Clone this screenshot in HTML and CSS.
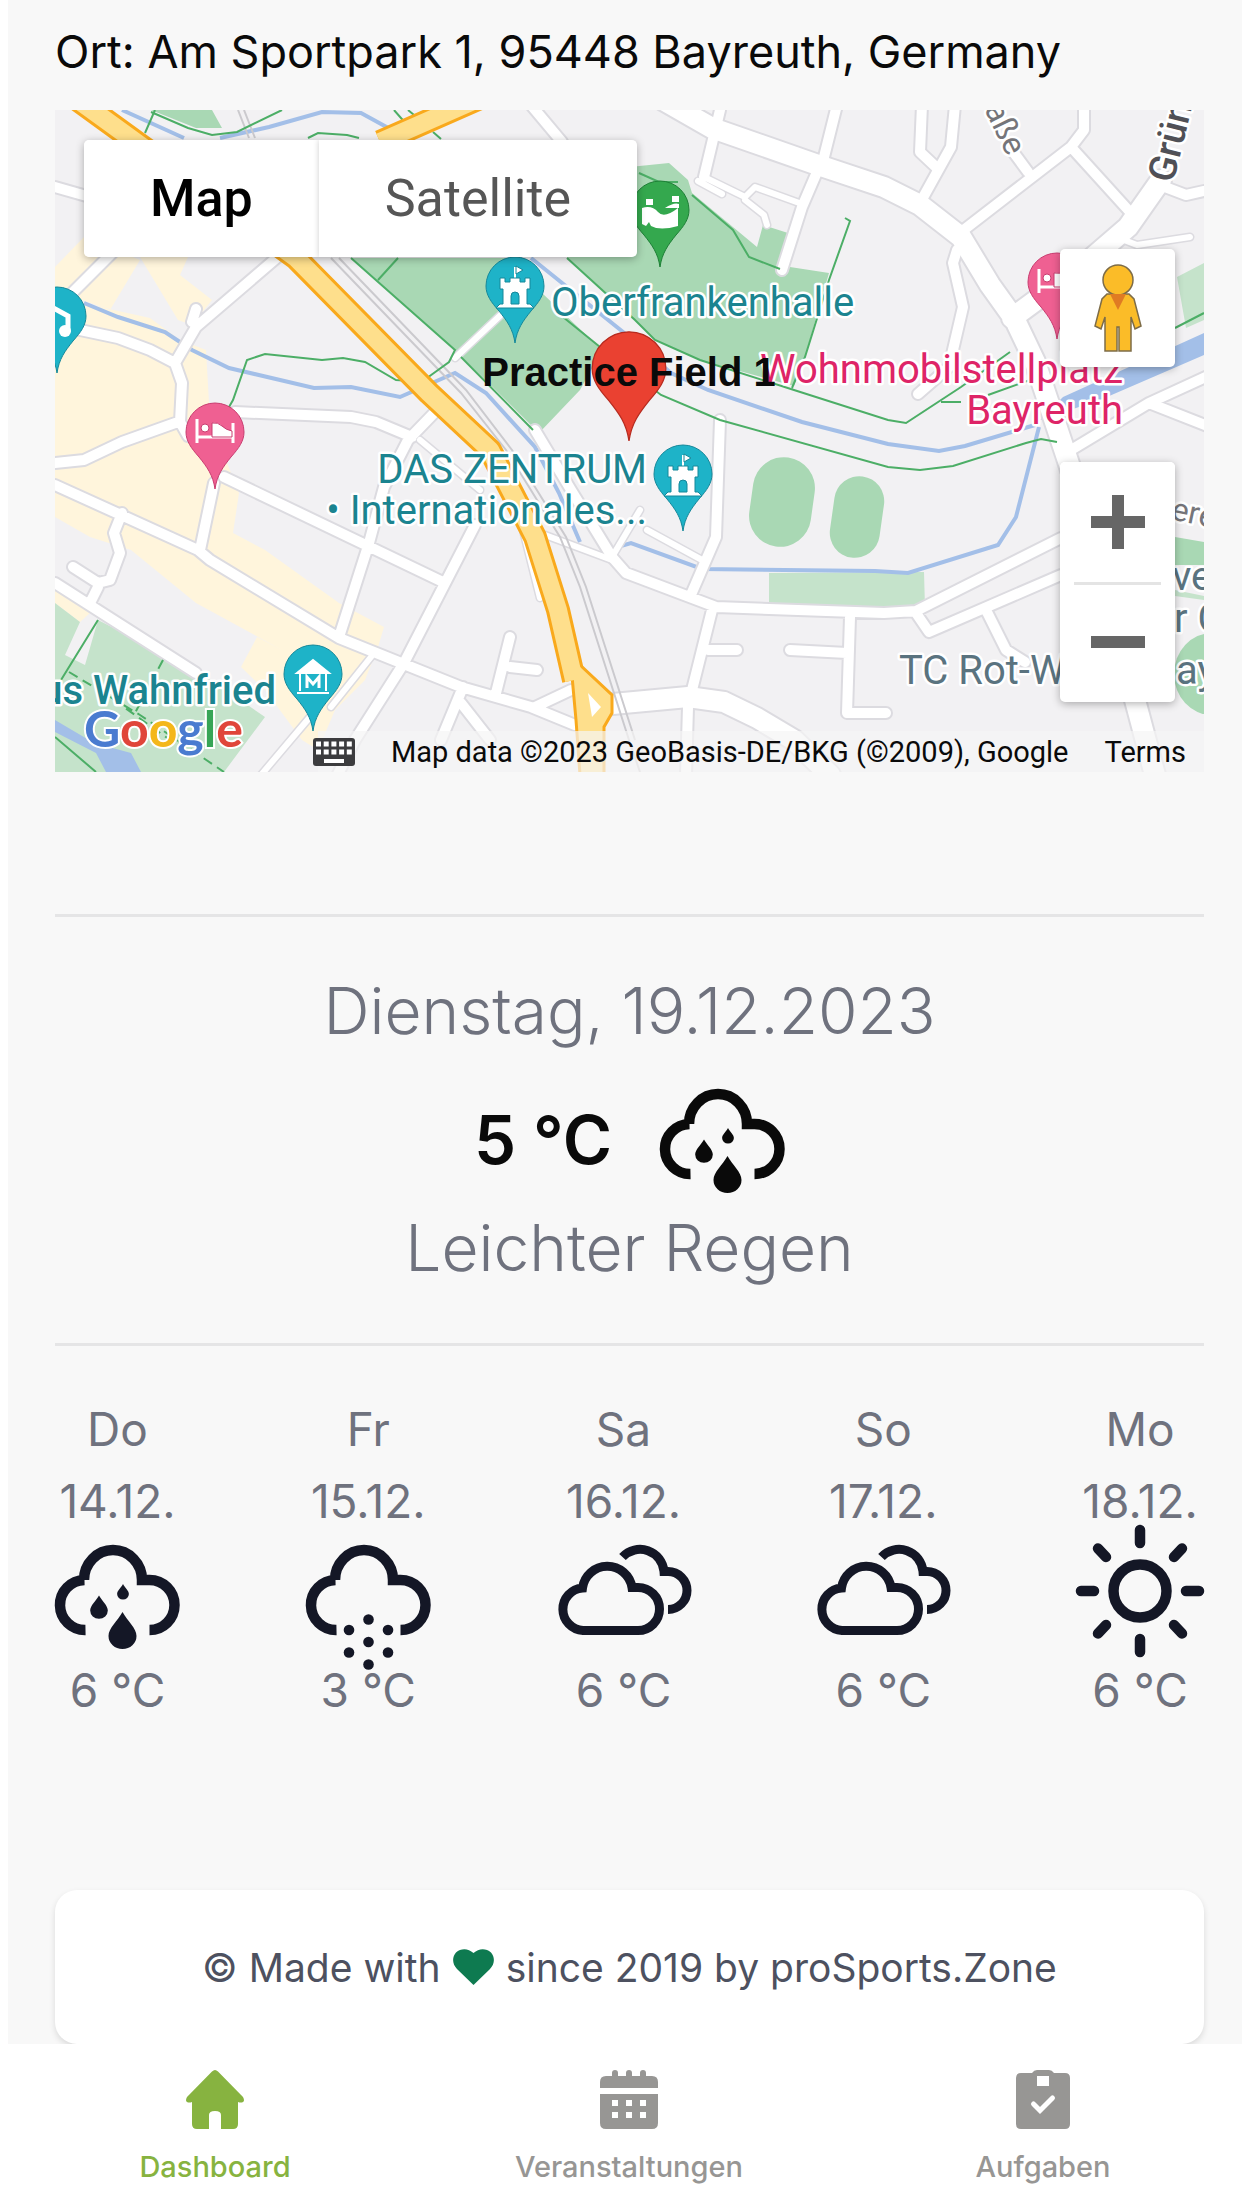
FILE: index.html
```html
<!DOCTYPE html>
<html lang="de">
<head>
<meta charset="utf-8">
<meta name="viewport" content="width=device-width, initial-scale=1">
<title>Dashboard – proSports.Zone</title>
<link rel="stylesheet" href="styles.css">
</head>
<body>
<svg class="sprite" width="0" height="0" aria-hidden="true">
  <defs>
    <path id="drop" d="M0 0C5 9 14 16 14 24A14 13 0 0 1-14 24C-14 16-5 9 0 0Z"/>
    <path id="open-cloud" d="M30.500 93A25 25 0 0 1 29.500 43L29 43A29 30 0 0 1 87 43L94.500 43A25 25 0 0 1 94.500 93" fill="none" stroke="currentColor" stroke-width="10.500"/>
    <symbol id="icon-rain" viewBox="0 0 125 117" overflow="visible">
      <use href="#open-cloud"/>
      <g fill="currentColor">
        <use href="#drop" transform="translate(67.500 75)"/>
        <use href="#drop" transform="translate(44 58.500) scale(.63)"/>
        <use href="#drop" transform="translate(68 47) scale(.42)"/>
      </g>
    </symbol>
    <symbol id="icon-snow" viewBox="0 0 125 117" overflow="visible">
      <use href="#open-cloud"/>
      <g fill="currentColor">
        <circle cx="62.500" cy="82.500" r="5.300"/><circle cx="62.500" cy="105" r="5.300"/><circle cx="62.500" cy="127.500" r="5.300"/>
        <circle cx="43" cy="93" r="5.300"/><circle cx="82" cy="93" r="5.300"/><circle cx="43" cy="115.500" r="5.300"/><circle cx="82" cy="115.500" r="5.300"/>
      </g>
    </symbol>
    <symbol id="icon-cloudy" viewBox="0 0 134 117" overflow="visible">
      <g fill="none" stroke="currentColor" stroke-width="9">
        <path d="M26 93.500A21.300 21.300 0 0 1 25.500 51A25 25 0 0 1 75 50.500L81 50.500A21.500 21.500 0 0 1 81 93.500Z"/>
        <path d="M65.500 20A24 24 0 0 1 107 34.500L111 34.500A19 19 0 0 1 111 72.500"/>
      </g>
    </symbol>
    <symbol id="icon-sun" viewBox="0 0 128 117" overflow="visible">
      <g fill="none" stroke="currentColor" stroke-width="10.500" stroke-linecap="round">
        <circle cx="64" cy="54" r="26.500"/>
        <path d="M64-7V6M64 102v13M5 54H18M110 54h13M22 11.500 30 20M106 11.500 98 20M22 96.500 30 88M106 96.500 98 88"/>
      </g>
    </symbol>
  </defs>
</svg>

<div class="app">
  <main class="content">
    <p class="place">Ort: Am Sportpark 1, 95448 Bayreuth, Germany</p>

    <section class="map" aria-label="Karte">
      <svg class="map-canvas" viewBox="55 110 1149 662">
        <defs>
          <path id="pin" d="M0 0C-2-14-8-22-16-32C-24-41-29-48-29-57A29 29 0 1 1 29-57C29-48 24-41 16-32C8-22 2-14 0 0Z"/>
          <g id="castle"><path d="M0-76v14" stroke="#fff" stroke-width="2"/><path d="M1-77 8-73 1-69ZM-15-65h5v4h5v-4H5v4h5v-4h5v11h-3v15H15l4 4h-38l4-4h3v-15h-3z" fill="#fff"/><path class="door" d="M-4-39v-8a4 4 0 0 1 8 0v8z"/></g>
          <g id="bed"><path d="M-18-70v24M-18-52h36v6M18-52v-14" fill="none" stroke="#fff" stroke-width="3"/><circle cx="-10" cy="-61" r="4" fill="#fff"/><path d="M-3-66q6-1 10 3 4 4 10 5v6H-3z" fill="#fff"/></g>
          <g id="roads-lg">
            <path d="M663 100 712 128 818 165 884 187 920 205 961 237 990 285 1015 320 1035 362 1051 410 1071 470M1161 180 1128 227 1084 265 1012 318"/>
            <path d="M602 705 688 697 724 702 757 718 794 740 830 775M1135 700 1155 775"/>
          </g>
          <g id="roads-md">
            <path d="M720 110 704 177M837 105 824 157M820 165 802 207 782 270M922 105 920 152 937 168M955 105 951 147 920 203M1084 105V130L1071 147 961 232M1014 153 1028 172M1071 147 1130 212M1165 187 1186 195 1204 191M957 250 953 263 963 307 949 367 918 394"/>
            <path d="M55 187 90 197M531 105 562 142M115 250 73 292M280 255 196 327 175 363 182 383 180 422 188 436M80 330 118 338 150 350 175 363M196 309 192 322M55 463 84 460 122 442 178 422M235 412 351 417 376 422 412 437M437 410 408 440 384 487 369 543 339 637M224 477 445 583M475 525 404 663 355 740 335 780M55 485 198 550 210 560 339 638 461 687 531 707 575 725M214 483 200 550M122 513 114 533 120 553 110 580 98 583 73 567M98 587 90 603M55 583 196 673M510 637 496 693M510 667 537 670M463 687 441 740M461 703 490 740M535 707 571 690M535 430 571 490 612 557 626 573 716 607 884 613 916 611 1061 538M916 613 929 632 1061 575M720 420 716 537 690 597M712 610 692 690M708 650H737M790 650 847 653M850 617 847 713H886M986 610 1006 650 1025 662M688 707 686 775M1071 450 1149 403 1210 375M1149 403 1210 427"/>
          </g>
          <g id="roads-sm"><path d="M704 177 745 197 755 187 802 204M698 181 722 194M745 200 764 215 767 225M1124 240 1137 245 1190 237M647 530 702 560M545 535 612 560M371 657 331 707M310 717 261 775M506 310 455 358M612 557 640 510M420 440 480 490M523 530 540 598"/></g>
        </defs>

        <rect class="land" x="55" y="110" width="1149" height="662"/>
        <g class="town">
          <path d="M84 237 55 267V310L82 300 110 310 140 260ZM140 257H188L180 275 212 300 192 325 178 320ZM55 330 82 303 150 318 180 340 206 350 210 420 239 493 233 533 265 550 339 603 384 627 378 647 365 680 335 710 318 750 302 740 265 690 241 667 257 637 282 650 196 603 131 550 90 537 55 517ZM55 590 90 613 80 622 55 603Z"/>
        </g>
        <g class="park">
          <path d="M151 110H212L222 128H196ZM351 258 455 350 539 433 580 390 602 350 505 258ZM567 258 635 320 655 340 700 360 794 386 806 353 829 273 790 267 782 271 788 233 763 225 757 247 692 193 688 180 669 163 600 170Z"/>
          <rect x="751" y="457" width="62" height="90" rx="31" transform="rotate(8 782 502)"/>
          <rect x="832" y="476" width="50" height="82" rx="25" transform="rotate(8 857 517)"/>
          <path d="M1175 537 1204 542V565H1175Z"/><ellipse cx="1212" cy="674" rx="38" ry="41"/>
        </g>
        <path class="garden" d="M769 573 924 572 925 608 769 603ZM1177 277 1204 263V320L1186 328ZM55 603 80 622 65 655 85 665 98 620 196 670 265 717 224 772H55ZM1175 590 1204 596V600L1175 596Z"/>
        <path class="lake" d="M55 720 94 743 131 753 141 772H106L96 753 55 732ZM1204 333 1063 397 1040 420 1100 400 1204 355Z"/>
        <path class="river" d="M122 110 184 138M220 138 269 127 322 112 361 113 392 130M531 258 633 340 671 373 708 390 802 422 888 444 939 451 965 446 1035 425M84 303 118 317 165 332 192 350 229 368 314 388 351 387 400 397 455 373 486 393 535 447 559 493 580 542M614 548 631 543 702 569 875 571 908 573 998 545 1016 517 1039 427"/>
        <g class="casing"><use href="#roads-sm" stroke-width="9"/><use href="#roads-md" stroke-width="14"/><use href="#roads-lg" stroke-width="24"/></g>
        <g class="road"><use href="#roads-sm" stroke-width="6"/><use href="#roads-md" stroke-width="10"/><use href="#roads-lg" stroke-width="20"/></g>
        <path class="rail" d="M331 258 461 393 506 450 560 537 580 587 629 740 640 772M339 258 466 390 512 450 566 537 586 587 635 740M238 110 249 138M244 110 255 138"/>
        <path class="trail" d="M155 110 145 133M151 112 188 128 212 135 237 132 282 110M308 138 318 133 347 135 359 138M394 110 408 126M408 110 420 120M433 132 441 139M351 258 455 350 449 362 427 378M398 258 378 280M229 407 233 400 247 360 265 354 322 360 343 358 365 362 396 380 412 381M461 357 533 430M563 317 600 347 661 395 720 420 888 467 920 470 953 466 1026 443 1041 439 1057 442M567 258 635 320 655 340 700 360 794 390 888 420 906 423 961 387 1010 352M941 402H961M988 395 1030 380M692 195 733 230 749 257 780 269M845 218 850 221 829 280 805 357 792 388M639 173 659 182 678 182M1175 328 1204 313M98 620 61 680M55 737 96 772"/>
        <path class="trail dashed" d="M163 660 135 713M69 672 140 715 224 772M100 690 170 740"/>
        <path class="highway-edge" d="M78 100 140 145 296 258 429 393 490 450 535 537 558 610 574 680M480 98 380 142"/>
        <path class="highway-edge-thin" d="M571 665 580 665 612 695V713L604 727V775H580L576 720Z"/>
        <path class="highway" d="M78 100 140 145 296 258 429 393 490 450 535 537 558 610 574 680M480 98 380 142"/>
        <path fill="#fff" d="M588 693 601 707 592 717Z"/>

        <rect class="legal-band" x="318" y="731" width="886" height="41"/>

        <g class="pin-teal">
          <use href="#pin" x="515" y="343"/><use href="#castle" x="515" y="343"/>
          <use href="#pin" x="683" y="531"/><use href="#castle" x="683" y="531"/>
          <use href="#pin" x="57" y="373"/>
          <use href="#pin" x="313" y="731"/>
        </g>
        <path d="M50 306 68 316V332" fill="none" stroke="#fff" stroke-width="5"/><circle cx="65" cy="331" r="6" fill="#fff"/>
        <path d="M297 673 313 660 329 673ZM300 673V691M326 673V691M297 693H329" fill="#fff" stroke="#fff" stroke-width="2"/>
        <path d="M307 688V677L313 684 319 677V688" fill="none" stroke="#fff" stroke-width="3"/>
        <g class="pin-pink">
          <use href="#pin" x="215" y="489"/><use href="#bed" x="215" y="489"/>
          <use href="#pin" x="1057" y="339"/><use href="#bed" x="1057" y="339"/>
        </g>
        <use class="pin-green" href="#pin" x="660" y="267"/>
        <path d="M642 208Q652 205 658 212T678 208V226Q660 231 651 226L649 222 646 226 642 224ZM646 199h7v6h-7zM672 196h7v6h-7zM665 208Q674 202 679 204V208Z" fill="#fff"/>

        <g class="label">
          <text class="culture" x="551" y="316">Oberfrankenhalle</text>
          <text class="culture end" x="647" y="483">DAS ZENTRUM</text>
          <text class="culture end" x="647" y="524">• Internationales...</text>
          <text class="culture end strong" x="276" y="704">us Wahnfried</text>
          <text class="lodging end" x="1123" y="383">Wohnmobilstellplatz</text>
          <text class="lodging end" x="1123" y="424">Bayreuth</text>
          <text class="sport" x="899" y="684">TC Rot-W</text>
          <text class="sport" x="1176" y="684">ay</text>
          <text class="sport" x="1172" y="590">ve</text>
          <text class="sport" x="1174" y="632">r C</text>
          <text class="street" transform="translate(1170 519) rotate(12)">ere</text>
          <text class="street" transform="translate(984 109) rotate(64)">aße</text>
          <text class="street main" transform="translate(1173 184) rotate(-76)">Grün</text>
        </g>

        <use class="pin-red" href="#pin" transform="translate(629 441) scale(1.270)"/>
        <text class="field-name" x="629" y="386">Practice Field 1</text>
        <text class="brand" x="84" y="747"><tspan fill="#4a7bd0">G</tspan><tspan fill="#e0453a">o</tspan><tspan fill="#f4b71b">o</tspan><tspan fill="#4a7bd0">g</tspan><tspan fill="#37a556">l</tspan><tspan fill="#e0453a">e</tspan></text>
      </svg>

      <div class="map-type">
        <button class="type-button active" type="button">Map</button>
        <button class="type-button" type="button">Satellite</button>
      </div>

      <div class="map-tools">
        <button class="tool" type="button" aria-label="Street View">
          <svg width="50" height="90" viewBox="0 0 50 90"><g fill="#fbbc28" stroke="#7d6c48" stroke-width="1.500"><path d="M14 31H36L41 36 48 63 42 66 38 54V88H26V64H24V88H12V54L8 66 2 63 9 36Z"/><circle cx="25" cy="17" r="15"/></g><path d="M17 31H33L25 47Z" fill="#e07b23"/></svg>
        </button>
        <div class="zoom">
          <button class="tool" type="button" aria-label="Vergrößern"><svg width="54" height="54" viewBox="0 0 54 54"><path d="M27 0V54M0 27H54" stroke="#666" stroke-width="12"/></svg></button>
          <button class="tool" type="button" aria-label="Verkleinern"><svg width="54" height="54" viewBox="0 0 54 54"><path d="M0 27H54" stroke="#666" stroke-width="12"/></svg></button>
        </div>
      </div>

      <div class="legal">
        <svg width="42" height="28" viewBox="0 0 42 28"><rect width="42" height="28" rx="3" fill="#3c3c3e"/><path d="M3 6H39M3 14H39" stroke="#fff" stroke-width="5" stroke-dasharray="5 2.700"/><path d="M11 23H31" stroke="#fff" stroke-width="4"/></svg>
        <span>Map data ©2023 GeoBasis-DE/BKG (©2009), Google</span>
        <a href="#terms">Terms</a>
      </div>
    </section>

    <section class="today">
      <h2 class="headline">Dienstag, 19.12.2023</h2>
      <div class="now">
        <span class="now-temp">5 °C</span>
        <svg width="125" height="117" role="img" aria-label="Regen"><use href="#icon-rain"/></svg>
      </div>
      <p class="headline">Leichter Regen</p>
    </section>

    <section class="forecast">
      <div class="day"><span>Do</span><span>14.12.</span><svg width="125" height="117"><use href="#icon-rain"/></svg><span>6 °C</span></div>
      <div class="day"><span>Fr</span><span>15.12.</span><svg width="125" height="117"><use href="#icon-snow"/></svg><span>3 °C</span></div>
      <div class="day"><span>Sa</span><span>16.12.</span><svg width="134" height="117"><use href="#icon-cloudy"/></svg><span>6 °C</span></div>
      <div class="day"><span>So</span><span>17.12.</span><svg width="134" height="117"><use href="#icon-cloudy"/></svg><span>6 °C</span></div>
      <div class="day"><span>Mo</span><span>18.12.</span><svg width="128" height="117"><use href="#icon-sun"/></svg><span>6 °C</span></div>
    </section>

    <footer class="credit">
      <span>© Made with</span>
      <svg width="41" height="36" viewBox="0 0 41 36"><path fill="#0e7a50" d="M20.500 36 4 20C-1 15-1 8 3 3.500 8-1 15-1 20.500 4 26-1 33-1 38 3.500 42 8 42 15 37 20Z"/></svg>
      <span>since 2019 by proSports.Zone</span>
    </footer>
  </main>

  <nav class="tabs">
    <a class="tab active" href="#dashboard">
      <svg width="58" height="59" viewBox="0 0 58 59"><path fill="currentColor" d="M26 1.500Q29-1.500 32 1.500L57 27Q59 31 57 32 55 33 52 32V54Q52 59 47 59H35V45Q35 41 29 41T23 45V59H11Q6 59 6 54V32Q3 33 1 32-1 31 1 27Z"/></svg>
      <span>Dashboard</span>
    </a>
    <a class="tab" href="#veranstaltungen">
      <svg width="58" height="59" viewBox="0 0 58 59"><path fill="currentColor" fill-rule="evenodd" d="M0 18V12Q0 6 6 6H12V3Q12 0 15 0T18 3V6H26V3Q26 0 29 0T32 3V6H40V3Q40 0 43 0T46 3V6H52Q58 6 58 12V18ZM0 24H58V53Q58 59 52 59H6Q0 59 0 53ZM12 30V36H18V30ZM26 30V36H32V30ZM40 30V36H46V30ZM12 42V48H18V42ZM26 42V48H32V42ZM40 42V48H46V42Z"/></svg>
      <span>Veranstaltungen</span>
    </a>
    <a class="tab" href="#aufgaben">
      <svg width="58" height="59" viewBox="0 0 58 59"><path fill="currentColor" fill-rule="evenodd" d="M7 3H18Q20 0 23 0H35Q38 0 40 3H51Q56 3 56 8V54Q56 59 51 59H7Q2 59 2 54V8Q2 3 7 3ZM23 6V16H35V6Z"/><path d="M19.500 34 26 40.500 38.500 28" fill="none" stroke="#fff" stroke-width="5" stroke-linecap="round"/></svg>
      <span>Aufgaben</span>
    </a>
  </nav>
</div>
</body>
</html>
```
FILE: styles.css
```css
* { box-sizing: border-box; }

body {
  margin: 0;
  background: #fff;
  font-family: Inter, "Liberation Sans", sans-serif;
  overflow-x: hidden;
}

p, h2 { margin: 0; }
svg { display: block; flex: none; }
button { border: 0; padding: 0; background: #fff; font: inherit; cursor: pointer; }
a { color: inherit; text-decoration: none; }

.sprite { position: absolute; }

/* The app column is as wide as the window and starts after the white edge. */
.app {
  width: 100%;
  margin-left: 8px;
}

.content {
  background: #f8f8f8;
  padding: 0 46px 0 47px;
}

.place {
  padding: 16px 0 22px;
  font-size: 45px;
  line-height: 72px;
  color: #0a0a0a;
  white-space: nowrap;
}

/* Map */
.map { position: relative; font-family: Roboto, "Liberation Sans", sans-serif; }
.map-canvas { width: 100%; height: auto; }

.land { fill: #f2f1f3; }
.town { fill: #fff5dc; }
.park { fill: #a9d8b4; }
.garden { fill: #c5e3cb; }
.lake { fill: #a3bfe8; }
.river { fill: none; stroke: #a3bfe8; stroke-width: 4; }
.casing { fill: none; stroke: #dcdbe0; stroke-linecap: round; stroke-linejoin: round; }
.road { fill: none; stroke: #fff; stroke-linecap: round; stroke-linejoin: round; }
.rail { fill: none; stroke: #cbcace; stroke-width: 2; }
.trail { fill: none; stroke: #4cae66; stroke-width: 2; }
.dashed { stroke-dasharray: 10 6; }
.highway-edge { fill: none; stroke: #f9a91c; stroke-width: 24; stroke-linejoin: round; }
.highway-edge-thin { fill: #fedf8c; stroke: #f9a91c; stroke-width: 3; }
.highway { fill: none; stroke: #fedf8c; stroke-width: 18; stroke-linejoin: round; }
.legal-band { fill: #f5f5f5; fill-opacity: .7; }

.pin-teal { fill: #1eb3c8; stroke: #15889a; stroke-width: 1; }
.pin-teal .door { fill: #1eb3c8; }
.pin-pink { fill: #ef6092; stroke: #c93d70; stroke-width: 1; }
.pin-green { fill: #34a84e; stroke: #1e7f36; stroke-width: 1; }
.pin-red { fill: #ea4131; stroke: #b72a1e; stroke-width: 1; }

.label { font-size: 40px; stroke: #fff; stroke-width: 5; stroke-linejoin: round; paint-order: stroke; }
.end { text-anchor: end; }
.culture { fill: #1b8490; }
.lodging { fill: #de2467; }
.sport { fill: #5a737f; }
.strong { font-weight: 500; }
.street { font-size: 32px; fill: #75757a; }
.street.main { font-size: 38px; font-weight: 500; fill: #505056; }
.field-name { font: bold 40px "Liberation Sans", Arial, sans-serif; fill: #0a0a0a; text-anchor: middle; }
.brand { font: bold 50px Lato, sans-serif; stroke: #fff; stroke-width: 4; paint-order: stroke; }

.map-type {
  position: absolute;
  top: 30px;
  left: 29px;
  display: flex;
  height: 117px;
  border-radius: 5px;
  box-shadow: 0 2px 8px rgba(0, 0, 0, .3);
  overflow: hidden;
}
.type-button { padding: 0 66px; font-size: 52px; color: #565656; }
.type-button.active { font-weight: 500; color: #000; }
.type-button + .type-button { box-shadow: 0 0 6px rgba(0, 0, 0, .2); }

.map-tools {
  position: absolute;
  top: 139px;
  right: 29px;
  display: flex;
  flex-direction: column;
  gap: 95px;
}
.tool {
  display: flex;
  align-items: center;
  justify-content: center;
  width: 115px;
  height: 118px;
}
.map-tools > .tool, .zoom { background: #fff; border-radius: 5px; box-shadow: 0 2px 8px rgba(0, 0, 0, .3); }
.zoom { overflow: hidden; }
.zoom .tool { height: 120px; }
.zoom .tool + .tool { background: linear-gradient(#e4e4e4, #e4e4e4) center top / 87px 3px no-repeat; }

.legal {
  position: absolute;
  right: 18px;
  bottom: 0;
  display: flex;
  align-items: center;
  height: 40px;
  gap: 36px;
  font-size: 29px;
  color: #0a0a0a;
  white-space: nowrap;
}

/* Current weather */
.today {
  margin-top: 142px;
  padding: 46px 0 47px;
  border-top: 3px solid #e5e5e6;
  border-bottom: 3px solid #e5e5e6;
  text-align: center;
}
.headline {
  font-size: 64px;
  line-height: 96px;
  font-weight: 300;
  color: #6f727e;
}
.now {
  display: flex;
  justify-content: center;
  align-items: center;
  gap: 48px;
  height: 141px;
  padding-top: 20px;
  color: #0a0a0a;
}
.now-temp { font-size: 67px; font-weight: 600; }
.now svg { overflow: visible; }

/* Forecast */
.forecast {
  display: flex;
  justify-content: space-between;
  padding: 47px 0 164px;
  font-size: 46px;
  line-height: 72px;
  color: #6f727e;
}
.day { display: flex; flex-direction: column; align-items: center; }
.day svg { color: #141726; overflow: visible; }

.credit {
  display: flex;
  justify-content: center;
  align-items: center;
  gap: 12px;
  height: 154px;
  border-radius: 22px;
  background: #fff;
  box-shadow: 0 3px 6px rgba(0, 0, 0, .12);
  font-size: 39px;
  color: #4d5160;
}

/* Tab bar */
.tabs {
  position: relative;
  display: flex;
  height: 165px;
  padding-top: 26px;
  background: #fff;
  font-size: 29px;
  line-height: 36px;
  font-weight: 500;
  color: #979694;
}
.tab {
  flex: 1;
  display: flex;
  flex-direction: column;
  align-items: center;
  gap: 20px;
}
.tab.active { color: #87b340; }
```
